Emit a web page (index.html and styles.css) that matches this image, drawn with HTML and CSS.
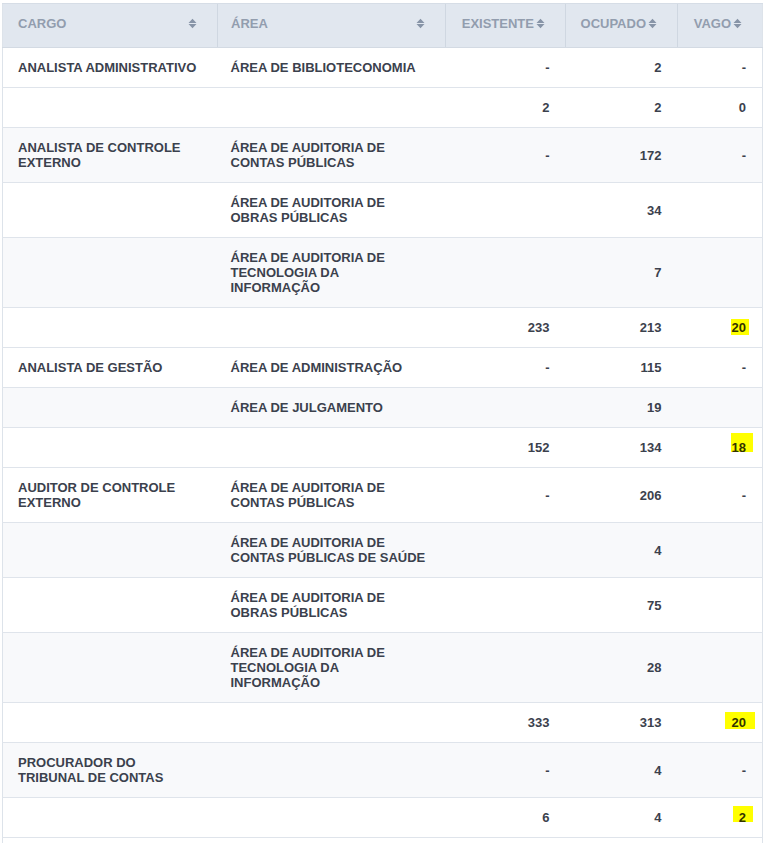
FILE: index.html
```html
<!DOCTYPE html>
<html lang="pt-BR">
<head>
<meta charset="utf-8">
<title>Quadro de cargos</title>
<link rel="stylesheet" href="styles.css">
</head>
<body>
<div class="wrap">
<table class="quadro">
  <colgroup>
    <col class="c-cargo"><col class="c-area"><col class="c-num1"><col class="c-num2"><col class="c-num3">
  </colgroup>
  <thead>
    <tr>
      <th><div class="th-inner"><span>CARGO</span><svg class="sort" viewBox="0 0 9 11"><path d="M0.5 5 L4.5 0.8 L8.5 5 Z M0.5 6 L4.5 10.2 L8.5 6 Z"/></svg></div></th>
      <th><div class="th-inner"><span>ÁREA</span><svg class="sort" viewBox="0 0 9 11"><path d="M0.5 5 L4.5 0.8 L8.5 5 Z M0.5 6 L4.5 10.2 L8.5 6 Z"/></svg></div></th>
      <th class="num"><div class="th-inner"><span>EXISTENTE</span><svg class="sort" viewBox="0 0 9 11"><path d="M0.5 5 L4.5 0.8 L8.5 5 Z M0.5 6 L4.5 10.2 L8.5 6 Z"/></svg></div></th>
      <th class="num"><div class="th-inner"><span>OCUPADO</span><svg class="sort" viewBox="0 0 9 11"><path d="M0.5 5 L4.5 0.8 L8.5 5 Z M0.5 6 L4.5 10.2 L8.5 6 Z"/></svg></div></th>
      <th class="num"><div class="th-inner"><span>VAGO</span><svg class="sort" viewBox="0 0 9 11"><path d="M0.5 5 L4.5 0.8 L8.5 5 Z M0.5 6 L4.5 10.2 L8.5 6 Z"/></svg></div></th>
    </tr>
  </thead>
  <tbody>
    <tr><td>ANALISTA ADMINISTRATIVO</td><td>ÁREA DE BIBLIOTECONOMIA</td><td class="num">-</td><td class="num">2</td><td class="num">-</td></tr>
    <tr><td></td><td></td><td class="num">2</td><td class="num">2</td><td class="num">0</td></tr>
    <tr class="striped"><td>ANALISTA DE CONTROLE EXTERNO</td><td>ÁREA DE AUDITORIA DE CONTAS PÚBLICAS</td><td class="num">-</td><td class="num">172</td><td class="num">-</td></tr>
    <tr><td></td><td>ÁREA DE AUDITORIA DE OBRAS PÚBLICAS</td><td class="num"></td><td class="num">34</td><td class="num"></td></tr>
    <tr class="striped"><td></td><td>ÁREA DE AUDITORIA DE TECNOLOGIA DA INFORMAÇÃO</td><td class="num"></td><td class="num">7</td><td class="num"></td></tr>
    <tr><td></td><td></td><td class="num">233</td><td class="num">213</td><td class="num"><span class="hl hl-1">20</span></td></tr>
    <tr><td>ANALISTA DE GESTÃO</td><td>ÁREA DE ADMINISTRAÇÃO</td><td class="num">-</td><td class="num">115</td><td class="num">-</td></tr>
    <tr class="striped"><td></td><td>ÁREA DE JULGAMENTO</td><td class="num"></td><td class="num">19</td><td class="num"></td></tr>
    <tr><td></td><td></td><td class="num">152</td><td class="num">134</td><td class="num"><span class="hl hl-2">18</span></td></tr>
    <tr><td>AUDITOR DE CONTROLE EXTERNO</td><td>ÁREA DE AUDITORIA DE CONTAS PÚBLICAS</td><td class="num">-</td><td class="num">206</td><td class="num">-</td></tr>
    <tr class="striped"><td></td><td>ÁREA DE AUDITORIA DE CONTAS PÚBLICAS DE SAÚDE</td><td class="num"></td><td class="num">4</td><td class="num"></td></tr>
    <tr><td></td><td>ÁREA DE AUDITORIA DE OBRAS PÚBLICAS</td><td class="num"></td><td class="num">75</td><td class="num"></td></tr>
    <tr class="striped"><td></td><td>ÁREA DE AUDITORIA DE TECNOLOGIA DA INFORMAÇÃO</td><td class="num"></td><td class="num">28</td><td class="num"></td></tr>
    <tr><td></td><td></td><td class="num">333</td><td class="num">313</td><td class="num"><span class="hl hl-3">20</span></td></tr>
    <tr class="striped"><td>PROCURADOR DO TRIBUNAL DE CONTAS</td><td></td><td class="num">-</td><td class="num">4</td><td class="num">-</td></tr>
    <tr><td></td><td></td><td class="num">6</td><td class="num">4</td><td class="num"><span class="hl hl-4">2</span></td></tr>
    <tr><td></td><td></td><td class="num"></td><td class="num"></td><td class="num"></td></tr>
  </tbody>
</table>
</div>
</body>
</html>
```

FILE: styles.css
```css
html, body {
  margin: 0;
  padding: 0;
  background: #ffffff;
}

body {
  font-family: "Liberation Sans", Arial, sans-serif;
  font-size: 13px;
  color: #3b414d;
}

.wrap {
  padding: 3px 2px 0 2px;
}

.quadro {
  width: 760px;
  table-layout: fixed;
  border-collapse: collapse;
  border-left: 1px solid #dde3ea;
  border-right: 1px solid #dde3ea;
}

.c-cargo { width: 215px; }
.c-area { width: 228px; }
.c-num1 { width: 120px; }
.c-num2 { width: 112px; }
.c-num3 { width: 85px; }

.quadro th {
  background: #e1e7ef;
  color: #929dae;
  font-weight: bold;
  text-align: left;
  padding: 12px 20px 16px 13px;
  line-height: 15px;
  border-top: 1px solid #d6dde6;
  border-bottom: 1px solid #d3dae3;
  border-left: 1px solid #cfd7e1;
  vertical-align: middle;
}

.quadro th:first-child {
  border-left: none;
  padding-left: 15px;
}

.th-inner {
  display: flex;
  align-items: center;
  justify-content: space-between;
}

.quadro th.num .th-inner {
  justify-content: flex-end;
  gap: 2px;
}

.sort {
  width: 9px;
  height: 11px;
  flex: none;
  fill: #8794a7;
}

.quadro td {
  padding: 12px 16px 12px 13px;
  line-height: 15px;
  font-weight: bold;
  vertical-align: middle;
  border-top: 1px solid #dfe4eb;
  text-align: left;
}

.quadro td:first-child {
  padding-left: 15px;
}

.quadro td.num {
  text-align: right;
}

.quadro tr.striped td {
  background: #f8f9fb;
}

.hl {
  display: inline-block;
  background: #ffff00;
  color: #333300;
  line-height: 15px;
  vertical-align: top;
}

.hl-1 {
  padding: 1px 3px 0 1px;
  margin: -1px -3px 0 0;
  height: 15px;
}

.hl-2 {
  padding: 7px 7px 0 1px;
  margin: -7px -7px 3px 0;
  height: 12px;
}

.hl-3 {
  padding: 3px 9px 0 7px;
  margin: -3px -9px 1px 0;
  height: 14px;
}

.hl-4 {
  padding: 4px 7px 0 6px;
  margin: -4px -7px 3px 0;
  height: 12px;
}
```
